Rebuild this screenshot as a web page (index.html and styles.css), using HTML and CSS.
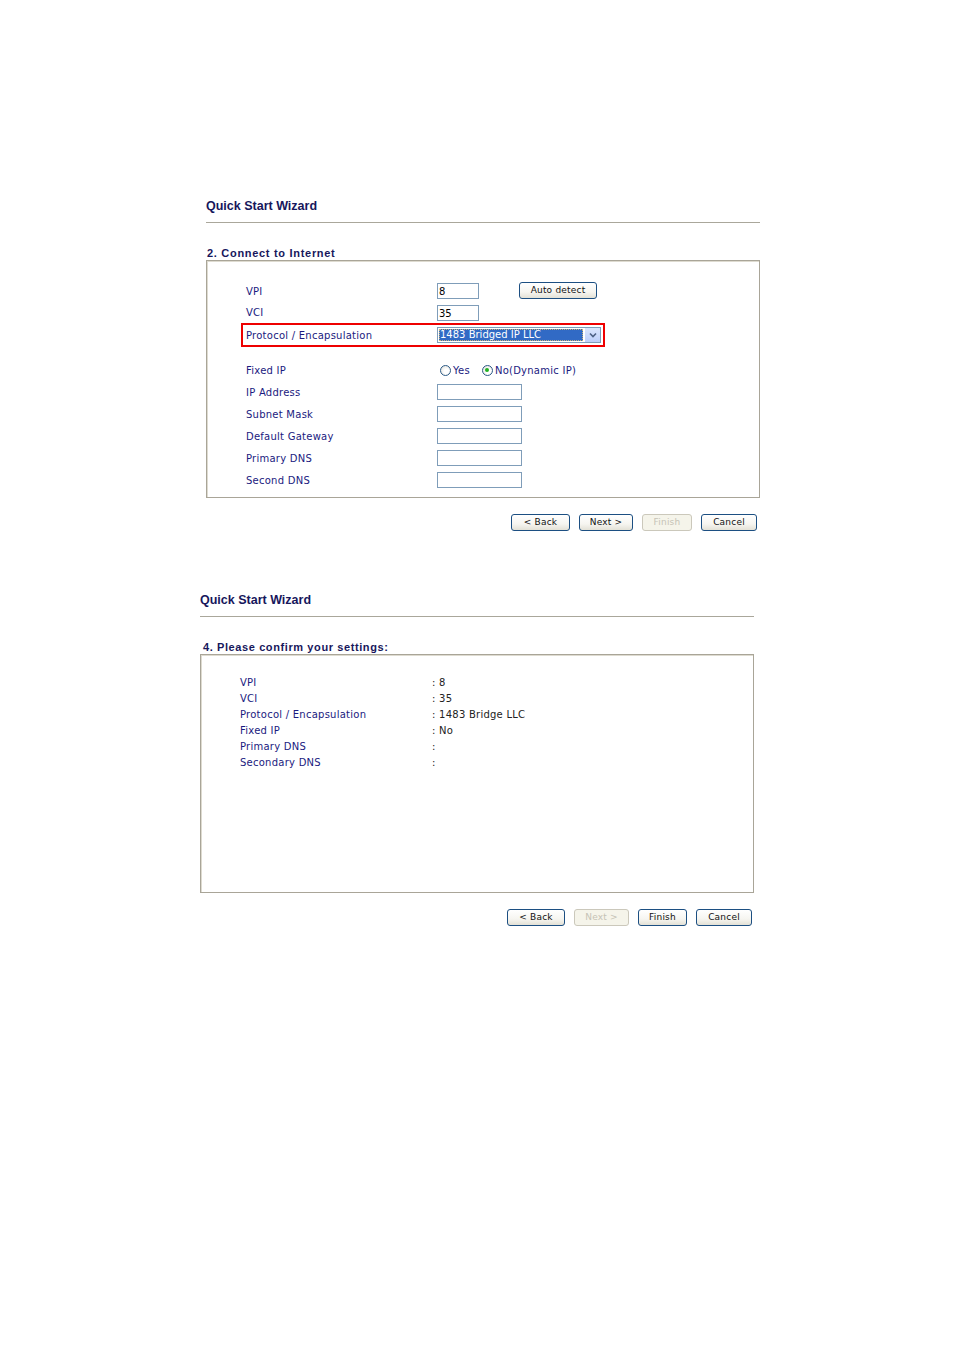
FILE: index.html
```html
<!DOCTYPE html>
<html>
<head>
<meta charset="utf-8">
<title>Quick Start Wizard</title>
<link rel="stylesheet" href="styles.css">
</head>
<body>
<div class="page">

  <section class="wizard w1">
    <h1 class="title">Quick Start Wizard</h1>
    <div class="rule"></div>
    <h2 class="step">2. Connect to Internet</h2>
    <div class="box box1">
      <div class="row h22">
        <span class="lbl">VPI</span>
        <div class="ctl"><span class="input short">8</span><span class="btn auto">Auto detect</span></div>
      </div>
      <div class="row h21">
        <span class="lbl">VCI</span>
        <div class="ctl"><span class="input short">35</span></div>
      </div>
      <div class="row hl">
        <span class="lbl">Protocol / Encapsulation</span>
        <div class="ctl">
          <div class="select">
            <span class="sel-text"><span class="focus">1483 Bridged IP LLC</span></span>
            <span class="sel-arrow"><svg width="8" height="6" viewBox="0 0 8 6"><path d="M1 1.5 L4 4.5 L7 1.5" fill="none" stroke="#4d6185" stroke-width="1.6"/></svg></span>
          </div>
        </div>
      </div>
      <div class="row h22 gap-top">
        <span class="lbl">Fixed IP</span>
        <div class="ctl radios">
          <span class="radio"></span><span class="rtxt r-yes">Yes</span>
          <span class="radio on"><span class="dot"></span></span><span class="rtxt">No(Dynamic IP)</span>
        </div>
      </div>
      <div class="row h22"><span class="lbl">IP Address</span><div class="ctl"><span class="input long"></span></div></div>
      <div class="row h22"><span class="lbl">Subnet Mask</span><div class="ctl"><span class="input long"></span></div></div>
      <div class="row h22"><span class="lbl">Default Gateway</span><div class="ctl"><span class="input long"></span></div></div>
      <div class="row h22"><span class="lbl">Primary DNS</span><div class="ctl"><span class="input long"></span></div></div>
      <div class="row h22"><span class="lbl">Second DNS</span><div class="ctl"><span class="input long"></span></div></div>
    </div>
    <div class="actions a1">
      <span class="btn b-back">&lt; Back</span>
      <span class="btn b-next">Next &gt;</span>
      <span class="btn b-finish disabled">Finish</span>
      <span class="btn b-cancel">Cancel</span>
    </div>
  </section>

  <section class="wizard w2">
    <h1 class="title">Quick Start Wizard</h1>
    <div class="rule"></div>
    <h2 class="step step2">4. Please confirm your settings:</h2>
    <div class="box box2">
      <div class="srow"><span class="slbl">VPI</span><span class="sval">: 8</span></div>
      <div class="srow"><span class="slbl">VCI</span><span class="sval">: 35</span></div>
      <div class="srow"><span class="slbl">Protocol / Encapsulation</span><span class="sval">: 1483 Bridge LLC</span></div>
      <div class="srow"><span class="slbl">Fixed IP</span><span class="sval">: No</span></div>
      <div class="srow"><span class="slbl">Primary DNS</span><span class="sval">:</span></div>
      <div class="srow"><span class="slbl">Secondary DNS</span><span class="sval">:</span></div>
    </div>
    <div class="actions a2">
      <span class="btn b-back2">&lt; Back</span>
      <span class="btn b-next2 disabled">Next &gt;</span>
      <span class="btn b-finish2">Finish</span>
      <span class="btn b-cancel">Cancel</span>
    </div>
  </section>

</div>
</body>
</html>
```
FILE: styles.css
```css
html, body {
  margin: 0;
  padding: 0;
  background: #ffffff;
}
body {
  font-family: "DejaVu Sans", Verdana, sans-serif;
  color: #1a1a80;
}
.page {
  padding-top: 199px;
}
.wizard {
  width: 554px;
}
.w1 {
  margin-left: 206px;
}
.w2 {
  margin-left: 200px;
  margin-top: 62px;
}
.title {
  margin: 0;
  font: bold 12.5px/14px "Liberation Sans", Arial, sans-serif;
  color: #17175c;
}
.rule {
  height: 1px;
  background: #aaa79b;
  margin-top: 9px;
}
.step {
  margin: 23px 0 0 1px;
  font: bold 11px/14px "Liberation Sans", Arial, sans-serif;
  letter-spacing: 0.7px;
  color: #17175c;
}
.step2 {
  margin-left: 3px;
  letter-spacing: 0.6px;
}
.box {
  box-sizing: border-box;
  border: 1px solid #a9a598;
  box-shadow: inset 1px 1px 0 #dedbd0;
}
.box1 {
  height: 238px;
  padding-top: 19px;
}
.box2 {
  height: 239px;
  padding-top: 19px;
}

/* form rows */
.row {
  display: grid;
  grid-template-columns: 191px 1fr;
  align-items: center;
  padding-left: 39px;
  font-size: 10px;
  letter-spacing: 0.25px;
}
.h22 { height: 22px; }
.h21 { height: 21px; }
.gap-top { margin-top: 12px; }
.row.hl {
  box-sizing: border-box;
  height: 24px;
  width: 364px;
  margin-left: 34px;
  padding-left: 3px;
  border: 2px solid #ee0000;
}
.lbl {
  color: #1a1a80;
  white-space: nowrap;
}
.ctl {
  display: flex;
  align-items: center;
}
.input {
  box-sizing: border-box;
  display: inline-block;
  height: 16px;
  border: 1px solid #7f9db9;
  background: #fff;
  color: #000;
  font: 10px/15px "DejaVu Sans", sans-serif;
  letter-spacing: 0;
  padding-left: 1px;
}
.input.short { width: 42px; }
.input.long { width: 85px; }

.btn {
  box-sizing: border-box;
  display: inline-flex;
  align-items: center;
  justify-content: center;
  height: 17px;
  border: 1px solid #1c4f82;
  border-radius: 3px;
  background: linear-gradient(#ffffff 0%, #f6f5f0 60%, #e3e1d6 100%);
  color: #111;
  font: 9px/1 "DejaVu Sans", Verdana, sans-serif;
  letter-spacing: 0.2px;
  white-space: nowrap;
}
.btn.disabled {
  border-color: #cbc8bb;
  background: #f5f4ea;
  color: #c6c3b6;
}
.btn.auto {
  width: 78px;
  height: 17px;
  margin-left: 40px;
  margin-top: -1px;
}

/* select */
.select {
  box-sizing: border-box;
  display: flex;
  width: 164px;
  height: 16px;
  border: 1px solid #7f9db9;
  background: #fff;
}
.sel-text {
  flex: 1;
  padding: 1px;
  display: flex;
}
.focus {
  flex: 1;
  background: #316ac5;
  color: #fff;
  outline: 1px dotted #c9b37a;
  outline-offset: -1px;
  font: 10px/12px "DejaVu Sans", sans-serif;
  letter-spacing: 0;
  padding-left: 1px;
  white-space: nowrap;
}
.sel-arrow {
  width: 15px;
  display: flex;
  align-items: center;
  justify-content: center;
  background: linear-gradient(#dbe6fd, #bccffa);
  border-left: 1px solid #fff;
}

/* radios */
.radios {
  margin-left: 3px;
}
.radio {
  box-sizing: border-box;
  width: 11px;
  height: 11px;
  border-radius: 50%;
  border: 1px solid #2c5a86;
  background: radial-gradient(circle at 60% 60%, #ffffff 30%, #dcdcd4 100%);
  display: inline-flex;
  align-items: center;
  justify-content: center;
}
.dot {
  width: 4px;
  height: 4px;
  border-radius: 50%;
  background: #22b122;
}
.rtxt {
  margin-left: 2px;
  color: #1a1a80;
}
.r-yes {
  margin-right: 12px;
}

/* actions */
.actions {
  display: flex;
  justify-content: flex-end;
  gap: 9px;
  margin-top: 16px;
}
.a1 { padding-right: 3px; }
.a2 { padding-right: 2px; }
.b-back { width: 59px; }
.b-next { width: 54px; }
.b-finish { width: 50px; }
.b-cancel { width: 56px; }
.b-back2 { width: 58px; }
.b-next2 { width: 55px; }
.b-finish2 { width: 49px; }

/* summary rows */
.srow {
  display: grid;
  grid-template-columns: 192px 1fr;
  align-items: center;
  height: 16px;
  padding-left: 39px;
  font-size: 10px;
  letter-spacing: 0.25px;
}
.slbl {
  color: #1a1a80;
  white-space: nowrap;
}
.sval {
  color: #222;
  white-space: pre;
}
```
